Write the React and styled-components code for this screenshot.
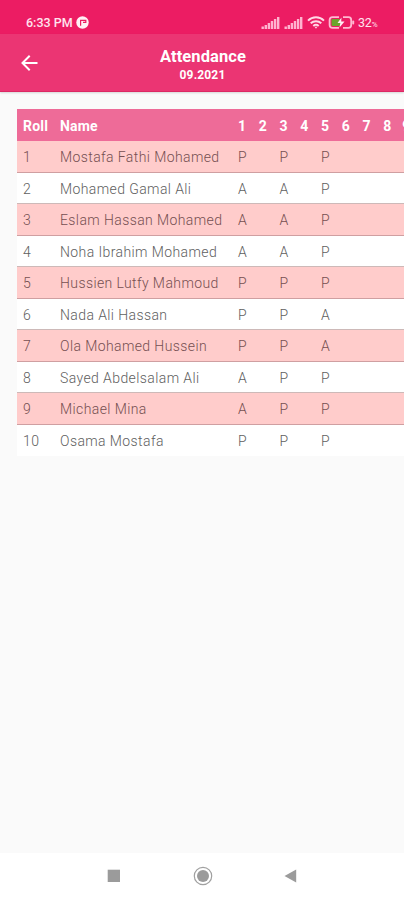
import React from 'react';
import styled, { createGlobalStyle } from 'styled-components';

const GlobalStyle = createGlobalStyle`
  * {
    box-sizing: border-box;
  }
  body {
    margin: 0;
    font-family: Roboto, 'Liberation Sans', sans-serif;
    overflow: hidden;
  }
`;

const Screen = styled.div`
  display: flex;
  flex-direction: column;
  width: 404px;
  height: 900px;
  background-color: #fafafa;
  overflow: hidden;
`;

const StatusBar = styled.div`
  display: flex;
  align-items: center;
  height: 34px;
  padding: 11px 26px 0 26px;
  background-color: #ec1c63;
  color: #ffe3ee;
  font-size: 12.5px;
`;

const Clock = styled.span`
  margin-right: 3px;
  font-weight: 500;
  letter-spacing: 0;
`;

const StatusIcons = styled.div`
  display: flex;
  align-items: center;
  margin-left: auto;
`;

const Signal = styled.svg`
  margin-right: 4px;
`;

const Battery = styled.span`
  width: 20px;
  margin-left: 3px;
  letter-spacing: -0.2px;
  white-space: nowrap;
`;

const Percent = styled.span`
  font-size: 8px;
`;

const Header = styled.header`
  display: flex;
  align-items: center;
  height: 58px;
  padding: 0 20px;
  background-color: #eb3573;
  border-bottom: 1px solid #dc2864;
  box-shadow: 0 1px 2px rgba(0, 0, 0, 0.15);
  color: #fff;
`;

const BackBtn = styled.button`
  display: flex;
  width: 20px;
  padding: 0;
  border: none;
  background: none;
  color: inherit;
`;

const TitleBox = styled.div`
  flex: 1;
  margin-right: 18px;
  padding-top: 6px;
  text-align: center;
`;

const Title = styled.h1`
  margin: 0;
  font-size: 16.5px;
  line-height: 20px;
  font-weight: 700;
  letter-spacing: 0.1px;
`;

const SubTitle = styled.p`
  margin: 0 0 1px;
  padding-right: 1px;
  font-size: 12px;
  line-height: 17px;
  font-weight: 700;
  letter-spacing: 0.15px;
`;

const Main = styled.main`
  flex: 1;
  padding: 17px 0 0 17px;
  overflow: hidden;
`;

const Row = styled.div`
  display: grid;
  grid-template-columns: 37px 178px repeat(7, 20.75px) 19px 20px;
  align-items: center;
  height: 31.5px;
  padding: 2px 0 0 6px;
  overflow: hidden;
  background-color: ${(props) => (props.$odd ? '#ffcccb' : '#fff')};
  border-bottom: 1px solid ${(props) => (props.$odd ? '#cf9fa1' : '#cdb9b8')};
  color: ${(props) => (props.$odd ? '#754f51' : '#606060')};
  font-size: 14px;
  font-weight: 300;
  letter-spacing: 0.4px;

  &:last-child {
    border-bottom-color: transparent;
  }
`;

const HeadRow = styled(Row)`
  height: 32px;
  border-bottom: none;
  background-color: #ee6b98;
  color: #fff;
  font-weight: 700;
  letter-spacing: 0.2px;
`;

const Cell = styled.span`
  white-space: nowrap;
`;

const NavBar = styled.nav`
  display: flex;
  justify-content: space-between;
  align-items: center;
  height: 47px;
  padding: 0 107px;
  padding-bottom: 1px;
  background-color: #fff;
`;

const days = [1, 2, 3, 4, 5, 6, 7, 8, 9];

const students = [
  { name: 'Mostafa Fathi Mohamed', marks: { 1: 'P', 3: 'P', 5: 'P' } },
  { name: 'Mohamed Gamal Ali', marks: { 1: 'A', 3: 'A', 5: 'P' } },
  { name: 'Eslam Hassan Mohamed', marks: { 1: 'A', 3: 'A', 5: 'P' } },
  { name: 'Noha Ibrahim Mohamed', marks: { 1: 'A', 3: 'A', 5: 'P' } },
  { name: 'Hussien Lutfy Mahmoud', marks: { 1: 'P', 3: 'P', 5: 'P' } },
  { name: 'Nada Ali Hassan', marks: { 1: 'P', 3: 'P', 5: 'A' } },
  { name: 'Ola Mohamed Hussein', marks: { 1: 'P', 3: 'P', 5: 'A' } },
  { name: 'Sayed Abdelsalam Ali', marks: { 1: 'A', 3: 'P', 5: 'P' } },
  { name: 'Michael Mina', marks: { 1: 'A', 3: 'P', 5: 'P' } },
  { name: 'Osama Mostafa', marks: { 1: 'P', 3: 'P', 5: 'P' } },
];

function SignalIcon() {
  return (
    <Signal width='19' height='12' viewBox='0 0 19 12' fill='#ffb3cf'>
      <rect x='0.5' y='9.5' width='2.4' height='2.5' />
      <rect x='3.6' y='8' width='2.4' height='4' />
      <rect x='6.7' y='6' width='2.4' height='6' />
      <rect x='9.8' y='4' width='2.4' height='8' />
      <rect x='12.9' y='2' width='2.4' height='10' />
      <rect x='16' y='0' width='2.4' height='12' />
    </Signal>
  );
}

function WifiIcon() {
  return (
    <svg width='18' height='13' viewBox='0 0 18 13' fill='none' stroke='#ffd9e6' strokeWidth='2'>
      <path d='M1 4.6C5.5 0.2 12.5 0.2 17 4.6' />
      <path d='M3.7 7.3C6.8 4.4 11.2 4.4 14.3 7.3' />
      <path d='M6.3 9.9C7.9 8.5 10.1 8.5 11.7 9.9' />
      <path d='M7.6 10.8L9 12.7L10.4 10.8Z' fill='#ffd9e6' stroke='none' />
    </svg>
  );
}

function BatteryIcon() {
  return (
    <svg width='27' height='13' viewBox='0 0 27 13'>
      <path
        d='M11 1.2H4.5Q1.6 1.2 1.6 4V9Q1.6 11.8 4.5 11.8H11M15 1.2H20.5Q23.2 1.2 23.2 4V9Q23.2 11.8 20.5 11.8H15'
        fill='none'
        stroke='#ffb9d1'
        strokeWidth='1.8'
      />
      <rect x='24.2' y='4.5' width='2' height='4' rx='1' fill='#ffb9d1' />
      <rect x='3.5' y='3' width='8.5' height='7' rx='1' fill='#6aa52c' />
      <path d='M13.5 1.5L9.5 7H12.3L11.5 11.5L16.5 5.5H13.2Z' fill='#fff0f5' />
    </svg>
  );
}

function App() {
  return (
    <Screen>
      <GlobalStyle />
      <StatusBar>
        <Clock>6:33 PM</Clock>
        <svg width='13' height='13' viewBox='0 0 13 13'>
          <circle cx='6.5' cy='6.5' r='6.2' fill='#fff0f5' />
          <path
            d='M4.6 9.8V4.4H9.8V6.4H7'
            fill='none'
            stroke='#ec1c63'
            strokeWidth='1.2'
          />
        </svg>
        <StatusIcons>
          <SignalIcon />
          <SignalIcon />
          <WifiIcon />
          <svg width='3' height='1' />
          <BatteryIcon />
          <Battery>
            32<Percent>%</Percent>
          </Battery>
        </StatusIcons>
      </StatusBar>
      <Header>
        <BackBtn type='button' aria-label='Back'>
          <svg
            width='19'
            height='18'
            viewBox='0 0 19 18'
            fill='none'
            stroke='currentColor'
            strokeWidth='2'
          >
            <path d='M17.5 9H2.5M9.7 1.8L2.5 9L9.7 16.2' />
          </svg>
        </BackBtn>
        <TitleBox>
          <Title>Attendance</Title>
          <SubTitle>09.2021</SubTitle>
        </TitleBox>
      </Header>
      <Main>
        <HeadRow>
          <Cell>Roll</Cell>
          <Cell>Name</Cell>
          {days.map((day) => (
            <Cell key={day}>{day}</Cell>
          ))}
        </HeadRow>
        {students.map((student, i) => (
          <Row key={student.name} $odd={i % 2 === 0}>
            <Cell>{i + 1}</Cell>
            <Cell>{student.name}</Cell>
            {days.map((day) => (
              <Cell key={day}>{student.marks[day]}</Cell>
            ))}
          </Row>
        ))}
      </Main>
      <NavBar>
        <svg width='14' height='14' viewBox='0 0 14 14'>
          <rect x='0.7' y='0.7' width='12.3' height='12.3' fill='#9b9b9b' />
        </svg>
        <svg width='20' height='20' viewBox='0 0 20 20'>
          <circle cx='10' cy='10' r='8.7' fill='none' stroke='#a0a0a0' strokeWidth='1.2' />
          <circle cx='10' cy='10' r='6' fill='#9b9b9b' />
        </svg>
        <svg width='13' height='14' viewBox='0 0 13 14'>
          <path d='M12.2 0.5V13.5L0.5 7Z' fill='#9b9b9b' />
        </svg>
      </NavBar>
    </Screen>
  );
}

export default App;
